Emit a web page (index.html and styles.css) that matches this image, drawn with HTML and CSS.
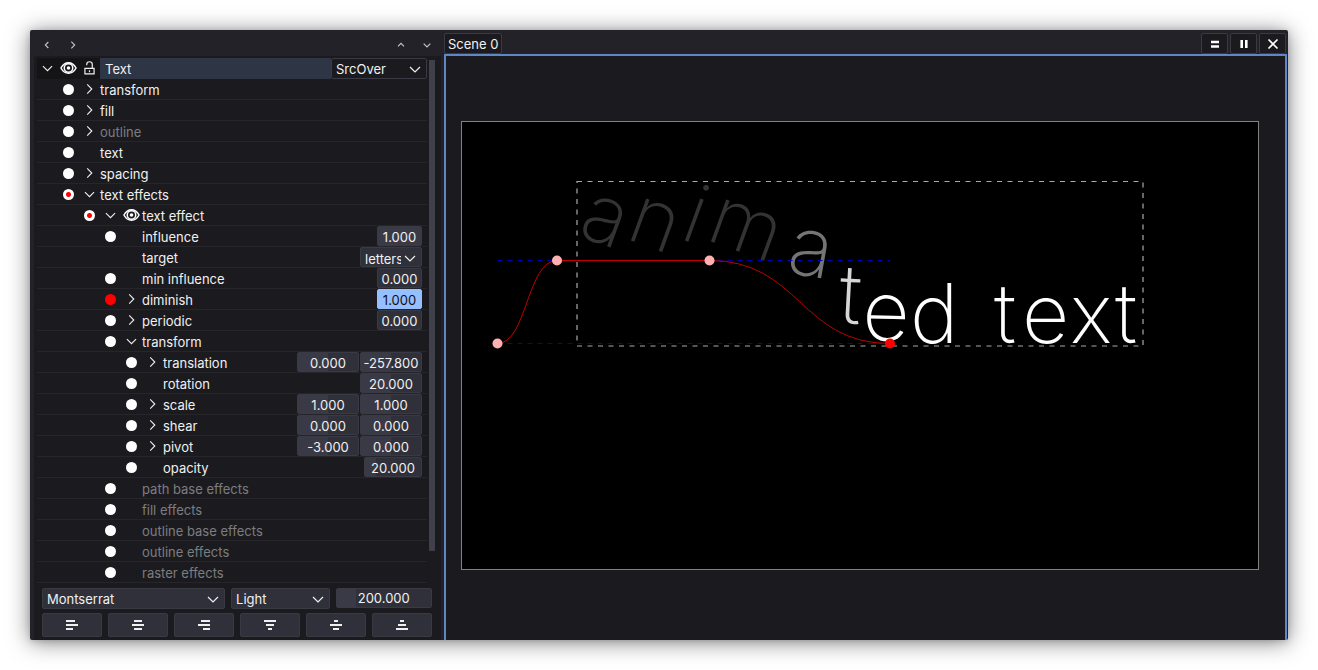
FILE: index.html
```html
<!DOCTYPE html>
<html lang="en">
<head>
<meta charset="utf-8">
<title>Scene 0</title>
<link rel="stylesheet" href="styles.css">
</head>
<body>
<svg class="defs" aria-hidden="true">
  <symbol id="right" viewBox="0 0 12 12"><path d="M3.500 1L8.500 6L3.500 11"/></symbol>
  <symbol id="down" viewBox="0 0 12 12"><path d="M1 4L6 9L11 4"/></symbol>
  <symbol id="left" viewBox="0 0 12 12"><path d="M8 1.500L3.500 6L8 10.500"/></symbol>
  <symbol id="up" viewBox="0 0 12 12"><path d="M1.500 8L6 3.500L10.500 8"/></symbol>
  <symbol id="eye" viewBox="0 0 18 14"><path d="M1 7C5 -0.500 13 -0.500 17 7C13 14.500 5 14.500 1 7Z" stroke-width="1.600"/><circle cx="9" cy="7" r="4.500" stroke-width="1.600"/><circle cx="9" cy="7" r="1.900" class="solid"/></symbol>
  <symbol id="lock" viewBox="0 0 12 16"><path d="M1 8.500H11V14.500H1ZM3 5V3.800C3 0.300 9 0.300 9 3.800V8.500M6 10.500V12.500" stroke-width="1.300"/></symbol>
</svg>
<main class="window">
  <section class="panel" aria-label="Properties">
    <header class="nav">
      <button aria-label="Back"><svg><use href="#left"/></svg></button>
      <button aria-label="Forward"><svg><use href="#right"/></svg></button>
      <span class="grow"></span>
      <button aria-label="Previous"><svg><use href="#up"/></svg></button>
      <button aria-label="Next"><svg><use href="#down"/></svg></button>
    </header>
    <div class="panel-body">
      <div class="scroller">
        <div class="tree">
          <div class="object">
            <button class="cell" aria-label="Collapse"><svg class="chev"><use href="#down"/></svg></button>
            <button class="cell" aria-label="Visible"><svg class="eye"><use href="#eye"/></svg></button>
            <button class="cell" aria-label="Unlocked"><svg class="lock"><use href="#lock"/></svg></button>
            <input class="object-name" aria-label="Object name" value="Text">
            <span class="select blend"><select aria-label="Blend mode"><option>SrcOver</option></select><svg><use href="#down"/></svg></span>
          </div>
          <ul class="rows">
            <li class="l1"><button class="cell dot" aria-label="Record transform"></button><button class="cell" aria-label="Expand transform"><svg class="chev"><use href="#right"/></svg></button><span>transform</span></li>
            <li class="l1"><button class="cell dot" aria-label="Record fill"></button><button class="cell" aria-label="Expand fill"><svg class="chev"><use href="#right"/></svg></button><span>fill</span></li>
            <li class="l1 off"><button class="cell dot" aria-label="Record outline"></button><button class="cell" aria-label="Expand outline"><svg class="chev"><use href="#right"/></svg></button><span>outline</span></li>
            <li class="l1"><button class="cell dot" aria-label="Record text"></button><i class="cell"></i><span>text</span></li>
            <li class="l1"><button class="cell dot" aria-label="Record spacing"></button><button class="cell" aria-label="Expand spacing"><svg class="chev"><use href="#right"/></svg></button><span>spacing</span></li>
            <li class="l1"><button class="cell dot part" aria-label="Record text effects"></button><button class="cell" aria-label="Collapse text effects"><svg class="chev"><use href="#down"/></svg></button><span>text effects</span></li>
            <li class="l2"><button class="cell dot part" aria-label="Record text effect"></button><button class="cell" aria-label="Collapse text effect"><svg class="chev"><use href="#down"/></svg></button><button class="cell" aria-label="Effect visible"><svg class="eye"><use href="#eye"/></svg></button><span>text effect</span></li>
            <li class="l3"><button class="cell dot" aria-label="Record influence"></button><i class="cell"></i><label for="influence">influence</label><input id="influence" class="num short" value="1.000"></li>
            <li class="l3"><i class="cell"></i><i class="cell"></i><label for="target">target</label><span class="select target"><select id="target"><option>letters</option></select><svg><use href="#down"/></svg></span></li>
            <li class="l3"><button class="cell dot" aria-label="Record min influence"></button><i class="cell"></i><label for="mininf">min influence</label><input id="mininf" class="num short empty" value="0.000"></li>
            <li class="l3"><button class="cell dot full" aria-label="Record diminish"></button><button class="cell" aria-label="Expand diminish"><svg class="chev"><use href="#right"/></svg></button><label for="diminish">diminish</label><input id="diminish" class="num short active" value="1.000"></li>
            <li class="l3"><button class="cell dot" aria-label="Record periodic"></button><button class="cell" aria-label="Expand periodic"><svg class="chev"><use href="#right"/></svg></button><label for="periodic">periodic</label><input id="periodic" class="num short empty" value="0.000"></li>
            <li class="l3"><button class="cell dot" aria-label="Record effect transform"></button><button class="cell" aria-label="Collapse effect transform"><svg class="chev"><use href="#down"/></svg></button><span>transform</span></li>
            <li class="l4"><button class="cell dot" aria-label="Record translation"></button><button class="cell" aria-label="Expand translation"><svg class="chev"><use href="#right"/></svg></button><label for="tx">translation</label><input id="tx" class="num" value="0.000"><input class="num" aria-label="translation y" value="-257.800"></li>
            <li class="l4"><button class="cell dot" aria-label="Record rotation"></button><i class="cell"></i><label for="rot">rotation</label><input id="rot" class="num" value="20.000"></li>
            <li class="l4"><button class="cell dot" aria-label="Record scale"></button><button class="cell" aria-label="Expand scale"><svg class="chev"><use href="#right"/></svg></button><label for="sx">scale</label><input id="sx" class="num" value="1.000"><input class="num" aria-label="scale y" value="1.000"></li>
            <li class="l4"><button class="cell dot" aria-label="Record shear"></button><button class="cell" aria-label="Expand shear"><svg class="chev"><use href="#right"/></svg></button><label for="hx">shear</label><input id="hx" class="num" value="0.000"><input class="num" aria-label="shear y" value="0.000"></li>
            <li class="l4"><button class="cell dot" aria-label="Record pivot"></button><button class="cell" aria-label="Expand pivot"><svg class="chev"><use href="#right"/></svg></button><label for="px">pivot</label><input id="px" class="num" value="-3.000"><input class="num" aria-label="pivot y" value="0.000"></li>
            <li class="l4"><button class="cell dot" aria-label="Record opacity"></button><i class="cell"></i><label for="opacity">opacity</label><input id="opacity" class="num medium low" value="20.000"></li>
            <li class="l3 off"><button class="cell dot" aria-label="Record path base effects"></button><i class="cell"></i><span>path base effects</span></li>
            <li class="l3 off"><button class="cell dot" aria-label="Record fill effects"></button><i class="cell"></i><span>fill effects</span></li>
            <li class="l3 off"><button class="cell dot" aria-label="Record outline base effects"></button><i class="cell"></i><span>outline base effects</span></li>
            <li class="l3 off"><button class="cell dot" aria-label="Record outline effects"></button><i class="cell"></i><span>outline effects</span></li>
            <li class="l3 off"><button class="cell dot" aria-label="Record raster effects"></button><i class="cell"></i><span>raster effects</span></li>
          </ul>
        </div>
        <div class="track"><div class="thumb"></div></div>
      </div>
      <div class="font-row">
        <span class="select family"><select aria-label="Font family"><option>Montserrat</option></select><svg><use href="#down"/></svg></span>
        <span class="select weight"><select aria-label="Font style"><option>Light</option></select><svg><use href="#down"/></svg></span>
        <input class="num size low" aria-label="Font size" value="200.000">
      </div>
      <div class="align-row">
        <button aria-label="Align left"><svg viewBox="0 0 12 12"><path d="M0 2H9M0 6H12M0 10H7"/></svg></button>
        <button aria-label="Align center"><svg viewBox="0 0 12 12"><path d="M2 2H10M0 6H12M2 10H10"/></svg></button>
        <button aria-label="Align right"><svg viewBox="0 0 12 12"><path d="M3 2H12M0 6H12M5 10H12"/></svg></button>
        <button aria-label="Align top"><svg viewBox="0 0 12 12"><path d="M0 2H12M2 6H10M4 10H8"/></svg></button>
        <button aria-label="Align middle"><svg viewBox="0 0 12 12"><path d="M4 2H8M0 6H12M3 10H9"/></svg></button>
        <button aria-label="Align bottom"><svg viewBox="0 0 12 12"><path d="M4 2H8M2 6H10M0 10H12"/></svg></button>
      </div>
    </div>
  </section>
  <section class="scene" aria-label="Scene">
    <header class="tabs">
      <button class="tab">Scene 0</button>
      <span class="grow"></span>
      <button class="tool" aria-label="Split horizontally"><svg viewBox="0 0 12 12"><path d="M2 4H10M2 8.500H10" stroke-width="2.600"/></svg></button>
      <button class="tool" aria-label="Split vertically"><svg viewBox="0 0 12 12"><path d="M3.700 2V10M8.300 2V10" stroke-width="2.600"/></svg></button>
      <button class="tool" aria-label="Close"><svg viewBox="0 0 12 12"><path d="M1.500 1.500L10.500 10.500M10.500 1.500L1.500 10.500" stroke-width="1.700"/></svg></button>
    </header>
    <div class="viewport">
      <svg class="canvas" viewBox="461 121 798 449" role="img" aria-label="animated text">
        <rect class="frame" x="461.500" y="121.500" width="797" height="448"/>
        <g class="glyphs">
          <g class="faint">
            <text transform="translate(576 235) rotate(20)">a</text>
            <text transform="translate(624 238) rotate(20)">n</text>
            <text transform="translate(678 238) rotate(20)">i</text>
            <text transform="translate(704 239) rotate(20)">m</text>
          </g>
          <text class="mid" transform="translate(785 272) rotate(10)">a</text>
          <text class="near" transform="translate(838 323) rotate(3)">t</text>
          <text transform="translate(862 340) rotate(1)">e</text>
          <text x="910" y="343">d</text>
          <text x="994" y="343">t</text>
          <text x="1022" y="343">e</text>
          <text x="1070" y="343">x</text>
          <text x="1115" y="343">t</text>
        </g>
        <path class="bounds" d="M577 181.500H1143V346H577Z"/>
        <path class="guide" d="M497.500 260.500H890M497.500 343.500H890"/>
        <path class="curve" d="M497.500 343.500C527 343.500 527 260.500 557 260.500H709.500C800 260.500 800 343.500 890 343.500"/>
        <g class="knots"><circle cx="497.500" cy="343.500" r="5"/><circle cx="557" cy="260.500" r="5"/><circle cx="709.500" cy="260.500" r="5"/><circle class="picked" cx="890" cy="343.500" r="5"/></g>
      </svg>
    </div>
  </section>
</main>
</body>
</html>
```
FILE: styles.css
```css
* { box-sizing: border-box; }
body { margin: 0; padding: 30px; min-height: 100vh; background: #fff; color: #f0f0f0; font: 13px/20px Inter, "Liberation Sans", sans-serif; display: flex; }
button, input, select { font: inherit; color: inherit; margin: 0; border: 0; padding: 0; background: none; appearance: none; min-width: 0; outline: 0; }
svg { fill: none; stroke: #f0f0f0; stroke-width: 1.2; display: block; }
.defs { position: absolute; width: 0; height: 0; }
.solid { fill: #fff; stroke: none; }
.grow { flex: 1; }

.window { flex: 1; min-width: 0; display: flex; background: #222228; border-radius: 2px; box-shadow: 0 2px 22px rgba(0, 0, 0, .5), 0 1px 6px rgba(0, 0, 0, .15); }
.panel { flex: 0 0 411px; display: flex; flex-direction: column; }
.nav { display: flex; height: 26px; padding: 3px 1px 0 4px; }
.nav button { width: 26px; display: grid; place-items: center; }
.nav svg { width: 8px; height: 8px; stroke: #c8c8cc; stroke-width: 1.6; }
.panel-body { flex: 1; margin-left: 4px; padding: 2px 0 0 3px; background: #1b1b1f; display: flex; flex-direction: column; border-radius: 2px 0 0 0; }
.scroller { display: flex; gap: 2px; }
.tree { width: 390px; }
.track { width: 6px; padding-top: 2px; }
.thumb { height: 491px; background: #40404d; }

.object { display: flex; height: 21px; background: #141416; }
.object-name { flex: 1; padding: 0 5px; background: #2e3545; }
.cell { flex: 0 0 21px; height: 20px; display: grid; place-items: center; }
.chev { width: 11px; height: 12px; }
.eye { width: 17px; height: 14px; stroke: #fff; }
.lock { width: 11px; height: 16px; }

.rows { list-style: none; margin: 0; padding: 0; }
.rows li { display: flex; height: 21px; padding-right: 5px; border-bottom: 1px solid #26262a; align-items: center; }
.rows li > span:not(.select), .rows label { flex: 1; padding-top: 1px; }
.rows .num, .rows .target select { padding-top: 1px; }
.rows .l1 { padding-left: 21px; }
.rows .l2 { padding-left: 42px; }
.rows .l3 { padding-left: 63px; }
.rows .l4 { padding-left: 84px; }
.off span { color: #7d7d80; }
.dot::before { content: ""; box-sizing: border-box; width: 11px; height: 11px; border-radius: 50%; background: #fff; }
.dot.part::before { background: radial-gradient(circle, #f00 2px, #fff 3px); }
.dot.full::before { background: #f00; }

.num { flex: 0 0 62px; height: 20px; border: 1px solid #3a3a45; border-radius: 2px; text-align: center; background: linear-gradient(90deg, #3a3a46 50%, #30303a 50%); }
.num + .num { margin-left: 1px; }
.num.short { flex-basis: 45px; background: #3a3a46; }
.num.short.empty { background: #30303a; }
.num.medium { flex-basis: 58px; }
.num.low { background: linear-gradient(90deg, #3a3a46 20%, #30303a 20%); }
.num.short.active { background: #96bfff; border-color: #96bfff; color: #101014; }

.select { position: relative; display: flex; height: 21px; border: 1px solid #3a3a45; border-radius: 2px; background: #30303a; }
.select select { width: 100%; padding: 0 20px 0 4px; text-overflow: clip; }
.select svg { position: absolute; right: 5px; top: 4px; width: 12px; height: 12px; pointer-events: none; }
.blend { width: 96px; background: #1b1b1f; }
.target { width: 62px; height: 20px; }

.font-row, .align-row { display: flex; gap: 6px; margin: 4px 9px 0 5px; }
.font-row { margin-top: 5px; }
.family { flex: 184 1 0; }
.weight { flex: 98 1 0; }
.font-row .size { flex: 96 1 0; }
.align-row button { flex: 1; height: 24px; border: 1px solid #3a3a45; border-radius: 2px; background: #30303a; display: grid; place-items: center; }
.align-row svg { width: 12px; height: 12px; stroke-width: 2; }

.scene { flex: 1; min-width: 0; margin-left: 3px; display: flex; flex-direction: column; }
.tabs { display: flex; height: 24px; padding: 3px 2px 0 0; gap: 2px; }
.tab, .tool { border: 1px solid #3a3a45; border-radius: 2px; background: #1b1b1f; }
.tab { padding: 0 3px; }
.tool { width: 27px; display: grid; place-items: center; }
.tool svg { width: 12px; height: 12px; stroke: #fff; }
.viewport { flex: 1; margin-right: 1px; padding: 65px 26px 0 15px; border: 2px solid #5f87c7; border-bottom: 0; background: #1b1b1f; }
.canvas { width: 100%; }
.frame { fill: #000; stroke: #80807c; stroke-width: 1; }
.glyphs { font: 250 82px Inter, "Liberation Sans", sans-serif; fill: #fff; stroke: none; }
.faint { fill: #333; }
.glyphs .mid { fill: #757575; }
.glyphs .near { fill: #d6d6d6; }
.bounds { stroke: #aaa; stroke-width: 1.2; stroke-dasharray: 5 5.5; }
.guide { stroke: #0000c0; stroke-dasharray: 5 5; stroke-width: 1; }
.curve { stroke: #c00000; stroke-width: 1; }
.knots { fill: #ffb0b0; stroke: none; }
.knots .picked { fill: #f00; }
```
